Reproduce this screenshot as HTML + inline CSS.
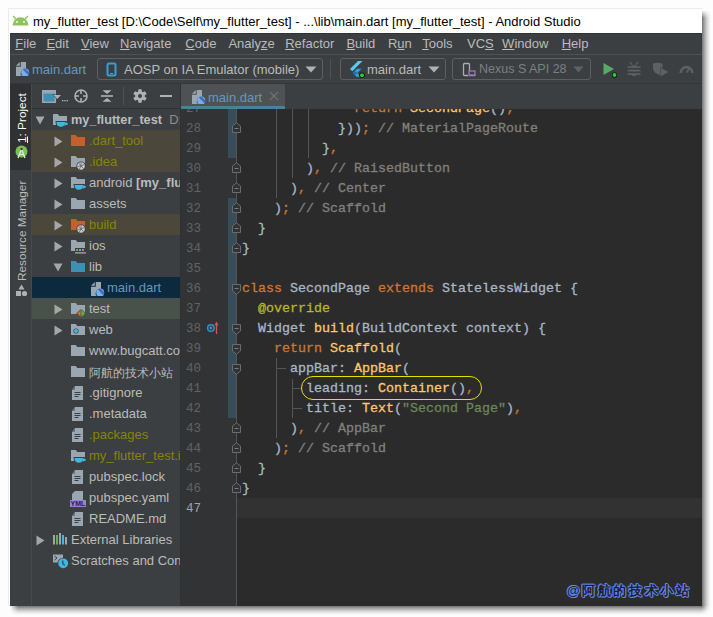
<!DOCTYPE html>
<html><head><meta charset="utf-8">
<style>
*{box-sizing:border-box}
html,body{margin:0;padding:0}
body{width:713px;height:617px;background:#fdfdfd;position:relative;overflow:hidden;font-family:"Liberation Sans",sans-serif;font-size:13px;color:#bbbbbb}
.a{position:absolute}
.t{position:absolute;white-space:nowrap;line-height:1}
.u{text-decoration:underline;text-underline-offset:1px}
.code{font-family:"Liberation Mono",monospace;font-size:13.33px;-webkit-text-stroke:0.3px;white-space:pre;position:absolute;line-height:20px}
.ln{font-family:"Liberation Mono",monospace;font-size:12.5px;position:absolute;color:#606366;white-space:pre;line-height:20px}
.kw{color:#cc7832}.fn{color:#ffc66d}.id{color:#a9b7c6}.cm{color:#808080}.st{color:#6a8759}.an{color:#bbb529}
.row{position:absolute;left:32px;width:148px;height:21px}
</style></head>
<body>
<svg width="0" height="0" style="position:absolute"><defs>
<clipPath id="dclip"><circle cx="10.2" cy="11.6" r="4"/></clipPath>
<symbol id="i_dartfile" viewBox="0 0 15 15">
 <path d="M5.8 1 H11 V8 A4.4 4.4 0 0 0 6.6 15 H1 V5.8 H5.8 Z" fill="#9aa7b0"/>
 <path d="M1 4.8 L4.8 1 V4.8 Z" fill="#9aa7b0"/>
 <circle cx="10.2" cy="11.6" r="4" fill="#6fb3ea"/>
 <g clip-path="url(#dclip)"><path d="M7.6 8.2 L9.6 6.6 L15.5 12.5 L13.5 14.5 Z" fill="#4b69c2"/></g>
</symbol></defs></svg>

<!-- outer faint border -->
<div class="a" style="left:8px;top:8px;width:695px;height:1px;background:#ececec"></div>
<div class="a" style="left:8px;top:8px;width:1px;height:598px;background:#ececec"></div>
<!-- window -->
<div class="a" style="left:10px;top:10px;width:692px;height:596px;background:#3c3f41"></div>
<div class="a" style="left:702px;top:10px;width:9px;height:596px;background:linear-gradient(90deg,rgba(0,0,0,0.54),rgba(0,0,0,0.3) 3px,rgba(0,0,0,0.1) 6px,rgba(0,0,0,0) 9px);-webkit-mask:linear-gradient(180deg,transparent 0,#000 8px)"></div>
<div class="a" style="left:10px;top:606px;width:692px;height:9px;background:linear-gradient(180deg,rgba(0,0,0,0.54),rgba(0,0,0,0.3) 3px,rgba(0,0,0,0.1) 6px,rgba(0,0,0,0) 9px);-webkit-mask:linear-gradient(90deg,transparent 0,#000 8px)"></div>
<div class="a" style="left:702px;top:606px;width:9px;height:9px;background:radial-gradient(circle at 0 0,rgba(0,0,0,0.5),rgba(0,0,0,0.25) 3px,rgba(0,0,0,0.07) 6px,rgba(0,0,0,0) 9px)"></div>
<!-- title bar -->
<div class="a" style="left:10px;top:10px;width:692px;height:23px;background:#ffffff"></div>
<svg class="a" style="left:12px;top:15px" width="17" height="11" viewBox="0 0 17 11">
  <path d="M0.5 10.5 A8 8.3 0 0 1 16.5 10.5 Z" fill="#8fc25d"/>
  <line x1="1" y1="1" x2="3.8" y2="3.8" stroke="#8fc25d" stroke-width="1.3"/>
  <line x1="16" y1="1" x2="13.2" y2="3.8" stroke="#8fc25d" stroke-width="1.3"/>
  <circle cx="5" cy="7" r="0.9" fill="#fff"/><circle cx="12" cy="7" r="0.9" fill="#fff"/>
</svg>
<div class="t" style="left:33px;top:15px;color:#000;font-size:13px">my_flutter_test [D:\Code\Self\my_flutter_test] - ...\lib\main.dart [my_flutter_test] - Android Studio</div>

<!-- menu bar -->
<div class="a" style="left:10px;top:33px;width:692px;height:21px;background:#3c3f41"></div>
<div class="a" style="left:10px;top:33px;width:692px;height:1px;background:#303234"></div>
<div class="a" style="left:10px;top:54px;width:692px;height:1px;background:#515151"></div>
<div class="t" style="left:15.3px;top:37px"><span class="u">F</span>ile</div>
<div class="t" style="left:46.4px;top:37px"><span class="u">E</span>dit</div>
<div class="t" style="left:81.0px;top:37px"><span class="u">V</span>iew</div>
<div class="t" style="left:120.1px;top:37px"><span class="u">N</span>avigate</div>
<div class="t" style="left:185.3px;top:37px"><span class="u">C</span>ode</div>
<div class="t" style="left:228.4px;top:37px">Analy<span class="u">z</span>e</div>
<div class="t" style="left:285.2px;top:37px"><span class="u">R</span>efactor</div>
<div class="t" style="left:346.4px;top:37px"><span class="u">B</span>uild</div>
<div class="t" style="left:387.9px;top:37px">R<span class="u">u</span>n</div>
<div class="t" style="left:422.2px;top:37px"><span class="u">T</span>ools</div>
<div class="t" style="left:467.0px;top:37px">VC<span class="u">S</span></div>
<div class="t" style="left:502.1px;top:37px"><span class="u">W</span>indow</div>
<div class="t" style="left:561.7px;top:37px"><span class="u">H</span>elp</div>

<!-- toolbar -->
<div class="a" style="left:10px;top:55px;width:692px;height:28px;background:#3c3f41"></div>
<div class="a" style="left:10px;top:83px;width:692px;height:1px;background:#353739"></div>


<!-- toolbar content -->
<svg class="a" style="left:15px;top:61px" width="15" height="15"><use href="#i_dartfile"/></svg>
<div class="t" style="left:32px;top:63px;color:#6897bb">main.dart</div>

<div class="a" style="left:97px;top:58px;width:226px;height:22px;border:1px solid #5e6060;border-radius:3px"></div>
<svg class="a" style="left:106px;top:62px" width="11" height="15" viewBox="0 0 11 15">
  <rect x="1.5" y="1.5" width="8" height="12" rx="1.5" fill="none" stroke="#389fd6" stroke-width="2"/>
  <rect x="4" y="11" width="3" height="1" fill="#389fd6"/>
</svg>
<div class="t" style="left:124px;top:63px">AOSP on IA Emulator (mobile)</div>
<svg class="a" style="left:305px;top:66px" width="12" height="7" viewBox="0 0 12 7"><path d="M0.5 0.5 H11.5 L6 6.5 Z" fill="#afb1b3"/></svg>
<div class="a" style="left:330px;top:59px;width:1px;height:20px;background:#515151"></div>

<div class="a" style="left:340px;top:58px;width:106px;height:22px;border:1px solid #5e6060;border-radius:3px"></div>
<svg class="a" style="left:349px;top:60px" width="16" height="18" viewBox="0 0 16 18">
  <path d="M1 9 L9 1 H13.5 L3.3 11.2 Z" fill="#5cc6f7"/>
  <path d="M8 8.8 H12.5 L8.3 13 L12 16.8 H7.5 L3.8 13 Z" fill="#2f9fe0"/>
  <path d="M5.9 10.9 L8.3 13 L6 15.2 L3.8 13 Z" fill="#1d6fb5"/>
  <circle cx="13" cy="15.3" r="2.7" fill="#000"/>
  <circle cx="13" cy="15.3" r="2" fill="#21d329"/>
</svg>
<div class="t" style="left:367px;top:63px">main.dart</div>
<svg class="a" style="left:428px;top:66px" width="12" height="7" viewBox="0 0 12 7"><path d="M0.5 0.5 H11.5 L6 6.5 Z" fill="#afb1b3"/></svg>

<div class="a" style="left:452px;top:58px;width:139px;height:22px;border:1px solid #5e6060;border-radius:3px"></div>
<svg class="a" style="left:462px;top:62px" width="15" height="15" viewBox="0 0 15 15">
  <rect x="1.5" y="1.5" width="6" height="12" rx="1" fill="none" stroke="#a8adb0" stroke-width="1.3"/>
  <rect x="6" y="8.5" width="7.5" height="5.5" fill="#3c3f41"/>
  <rect x="7" y="9" width="6" height="4" fill="none" stroke="#a77bca" stroke-width="1.2"/>
  <rect x="7" y="13" width="6.5" height="1.2" fill="#a77bca"/>
</svg>
<div class="t" style="left:479px;top:63px;color:#7d7f82;font-size:12.5px">Nexus S API 28</div>
<svg class="a" style="left:573px;top:66px" width="11" height="7" viewBox="0 0 11 7"><path d="M0.5 0.5 H10.5 L5.5 6.5 Z" fill="#5f6163"/></svg>

<svg class="a" style="left:601px;top:61px" width="18" height="17" viewBox="0 0 18 17">
  <path d="M2.5 2 L13 8 L2.5 14 Z" fill="#59a869"/>
  <circle cx="13.5" cy="14" r="2.6" fill="#000"/>
  <circle cx="13.5" cy="14" r="2" fill="#21d329"/>
</svg>
<svg class="a" style="left:627px;top:61px" width="14" height="16" viewBox="0 0 14 16" fill="#5d6062">
  <ellipse cx="7" cy="9.6" rx="4.3" ry="5.6"/>
  <rect x="0.5" y="5.3" width="13" height="1.6"/><rect x="0.5" y="8.8" width="13" height="1.6"/><rect x="0.5" y="12.3" width="13" height="1.6"/>
  <path d="M3 0.8 L5.2 3.8 M11 0.8 L8.8 3.8" stroke="#5d6062" stroke-width="1.4"/>
  <rect x="3" y="7" width="8" height="1.6" fill="#3c3f41"/><rect x="3" y="10.5" width="8" height="1.6" fill="#3c3f41"/>
</svg>
<svg class="a" style="left:652px;top:62px" width="17" height="15" viewBox="0 0 17 15" fill="#5d6062">
  <path d="M1 1.5 Q5.5 0 10.5 1.5 V5.5 H8 V13 Q2.5 11.5 1 7.5 Z"/>
  <path d="M8.5 5.5 L16.5 10 L8.5 14.5 Z"/>
</svg>
<svg class="a" style="left:679px;top:64px" width="15" height="10" viewBox="0 0 15 10">
  <path d="M1.6 9 A5.9 5.9 0 0 1 13.4 9" fill="none" stroke="#5d6062" stroke-width="2.6"/>
  <path d="M7.5 8.5 L10.5 4.5" stroke="#5d6062" stroke-width="1.8"/>
</svg>

<!-- left stripe -->
<div class="a" style="left:10px;top:84px;width:21px;height:522px;background:#3c3f41"></div>
<div class="a" style="left:10px;top:84px;width:21px;height:86px;background:#2f3133"></div>
<div class="a" style="left:31px;top:84px;width:1px;height:522px;background:#47494b"></div>

<!-- project panel -->
<div class="a" style="left:32px;top:84px;width:148px;height:522px;background:#3c3f41"></div>
<div class="a" style="left:32px;top:108px;width:148px;height:1px;background:#323232"></div>


<!-- editor -->
<div class="a" style="left:180px;top:84px;width:522px;height:25px;background:#3c3f41"></div>
<div class="a" style="left:180px;top:109px;width:56px;height:497px;background:#313335"></div>
<div class="a" style="left:237px;top:109px;width:465px;height:497px;background:#2b2b2b"></div>



<!-- CODE -->
<div class="a" style="left:237px;top:498px;width:465px;height:20px;background:#323232"></div>
<div class="a" style="left:228px;top:109px;width:8px;height:49px;background:#384c5a"></div>
<div class="a" style="left:228px;top:198px;width:8px;height:220px;background:#384c5a"></div>
<div class="a" style="left:236px;top:109px;width:1px;height:497px;background:#555555"></div>
<div class="a" style="left:276px;top:109px;width:1px;height:89px;background:#555555"></div>
<div class="a" style="left:292px;top:109px;width:1px;height:69px;background:#555555"></div>
<div class="a" style="left:308px;top:109px;width:1px;height:49px;background:#555555"></div>
<div class="a" style="left:276px;top:358px;width:1px;height:80px;background:#555555"></div>
<div class="a" style="left:292px;top:379px;width:1px;height:39px;background:#555555"></div>
<div class="a" style="left:276px;top:368px;width:10px;height:1px;background:#555555"></div>
<div class="a" style="left:292px;top:388px;width:10px;height:1px;background:#555555"></div>
<div class="a" style="left:292px;top:408px;width:10px;height:1px;background:#555555"></div>
<div class="ln" style="left:180px;width:21px;text-align:right;top:99px;color:#606366">27</div>
<div class="ln" style="left:180px;width:21px;text-align:right;top:119px;color:#606366">28</div>
<div class="ln" style="left:180px;width:21px;text-align:right;top:139px;color:#606366">29</div>
<div class="ln" style="left:180px;width:21px;text-align:right;top:159px;color:#606366">30</div>
<div class="ln" style="left:180px;width:21px;text-align:right;top:179px;color:#606366">31</div>
<div class="ln" style="left:180px;width:21px;text-align:right;top:199px;color:#606366">32</div>
<div class="ln" style="left:180px;width:21px;text-align:right;top:219px;color:#606366">33</div>
<div class="ln" style="left:180px;width:21px;text-align:right;top:239px;color:#606366">34</div>
<div class="ln" style="left:180px;width:21px;text-align:right;top:259px;color:#606366">35</div>
<div class="ln" style="left:180px;width:21px;text-align:right;top:279px;color:#606366">36</div>
<div class="ln" style="left:180px;width:21px;text-align:right;top:299px;color:#606366">37</div>
<div class="ln" style="left:180px;width:21px;text-align:right;top:319px;color:#606366">38</div>
<div class="ln" style="left:180px;width:21px;text-align:right;top:339px;color:#606366">39</div>
<div class="ln" style="left:180px;width:21px;text-align:right;top:359px;color:#606366">40</div>
<div class="ln" style="left:180px;width:21px;text-align:right;top:379px;color:#606366">41</div>
<div class="ln" style="left:180px;width:21px;text-align:right;top:399px;color:#606366">42</div>
<div class="ln" style="left:180px;width:21px;text-align:right;top:419px;color:#606366">43</div>
<div class="ln" style="left:180px;width:21px;text-align:right;top:439px;color:#606366">44</div>
<div class="ln" style="left:180px;width:21px;text-align:right;top:459px;color:#606366">45</div>
<div class="ln" style="left:180px;width:21px;text-align:right;top:479px;color:#606366">46</div>
<div class="ln" style="left:180px;width:21px;text-align:right;top:499px;color:#a4a3a3">47</div>
<div class="a" style="left:237px;top:109px;width:465px;height:497px;overflow:hidden"><div class="a" style="left:-237px;top:-109px;width:713px;height:617px"><div class="code" style="left:242px;top:99px">              <span class="kw">return</span> <span class="fn">SecondPage</span><span class="id">()</span><span class="kw">;</span></div>
<div class="code" style="left:242px;top:119px">            <span class="id">}))</span><span class="kw">;</span><span class="cm"> // MaterialPageRoute</span></div>
<div class="code" style="left:242px;top:139px">          <span class="id">}</span><span class="kw">,</span></div>
<div class="code" style="left:242px;top:159px">        <span class="id">)</span><span class="kw">,</span><span class="cm"> // RaisedButton</span></div>
<div class="code" style="left:242px;top:179px">      <span class="id">)</span><span class="kw">,</span><span class="cm"> // Center</span></div>
<div class="code" style="left:242px;top:199px">    <span class="id">)</span><span class="kw">;</span><span class="cm"> // Scaffold</span></div>
<div class="code" style="left:242px;top:219px">  <span class="id">}</span></div>
<div class="code" style="left:242px;top:239px"><span class="id">}</span></div>
<div class="code" style="left:242px;top:259px"></div>
<div class="code" style="left:242px;top:279px"><span class="kw">class</span><span class="id"> SecondPage </span><span class="kw">extends</span><span class="id"> StatelessWidget {</span></div>
<div class="code" style="left:242px;top:299px">  <span class="an">@override</span></div>
<div class="code" style="left:242px;top:319px">  <span class="id">Widget </span><span class="fn">build</span><span class="id">(BuildContext context) {</span></div>
<div class="code" style="left:242px;top:339px">    <span class="kw">return</span> <span class="fn">Scaffold</span><span class="id">(</span></div>
<div class="code" style="left:242px;top:359px">      <span class="id">appBar: </span><span class="fn">AppBar</span><span class="id">(</span></div>
<div class="code" style="left:242px;top:379px">        <span class="id">leading: </span><span class="fn">Container</span><span class="id">()</span><span class="kw">,</span></div>
<div class="code" style="left:242px;top:399px">        <span class="id">title: </span><span class="fn">Text</span><span class="id">(</span><span class="st">&quot;Second Page&quot;</span><span class="id">)</span><span class="kw">,</span></div>
<div class="code" style="left:242px;top:419px">      <span class="id">)</span><span class="kw">,</span><span class="cm"> // AppBar</span></div>
<div class="code" style="left:242px;top:439px">    <span class="id">)</span><span class="kw">;</span><span class="cm"> // Scaffold</span></div>
<div class="code" style="left:242px;top:459px">  <span class="id">}</span></div>
<div class="code" style="left:242px;top:479px"><span class="id">}</span></div>
<div class="code" style="left:242px;top:499px"></div></div></div>
<svg class="a" style="left:231px;top:122px" width="11" height="11" viewBox="0 0 11 11"><path d="M1.5 10.5 V4 L5.5 0.8 L9.5 4 V10.5 Z" fill="#313335" stroke="#6b6b6b" stroke-width="1"/><path d="M3.5 6.5 H7.5" stroke="#7b7b7b" stroke-width="1"/></svg>
<svg class="a" style="left:231px;top:162px" width="11" height="11" viewBox="0 0 11 11"><path d="M1.5 10.5 V4 L5.5 0.8 L9.5 4 V10.5 Z" fill="#313335" stroke="#6b6b6b" stroke-width="1"/><path d="M3.5 6.5 H7.5" stroke="#7b7b7b" stroke-width="1"/></svg>
<svg class="a" style="left:231px;top:182px" width="11" height="11" viewBox="0 0 11 11"><path d="M1.5 10.5 V4 L5.5 0.8 L9.5 4 V10.5 Z" fill="#313335" stroke="#6b6b6b" stroke-width="1"/><path d="M3.5 6.5 H7.5" stroke="#7b7b7b" stroke-width="1"/></svg>
<svg class="a" style="left:231px;top:202px" width="11" height="11" viewBox="0 0 11 11"><path d="M1.5 10.5 V4 L5.5 0.8 L9.5 4 V10.5 Z" fill="#313335" stroke="#6b6b6b" stroke-width="1"/><path d="M3.5 6.5 H7.5" stroke="#7b7b7b" stroke-width="1"/></svg>
<svg class="a" style="left:231px;top:222px" width="11" height="11" viewBox="0 0 11 11"><path d="M1.5 10.5 V4 L5.5 0.8 L9.5 4 V10.5 Z" fill="#313335" stroke="#6b6b6b" stroke-width="1"/><path d="M3.5 6.5 H7.5" stroke="#7b7b7b" stroke-width="1"/></svg>
<svg class="a" style="left:231px;top:242px" width="11" height="11" viewBox="0 0 11 11"><path d="M1.5 10.5 V4 L5.5 0.8 L9.5 4 V10.5 Z" fill="#313335" stroke="#6b6b6b" stroke-width="1"/><path d="M3.5 6.5 H7.5" stroke="#7b7b7b" stroke-width="1"/></svg>
<svg class="a" style="left:231px;top:422px" width="11" height="11" viewBox="0 0 11 11"><path d="M1.5 10.5 V4 L5.5 0.8 L9.5 4 V10.5 Z" fill="#313335" stroke="#6b6b6b" stroke-width="1"/><path d="M3.5 6.5 H7.5" stroke="#7b7b7b" stroke-width="1"/></svg>
<svg class="a" style="left:231px;top:442px" width="11" height="11" viewBox="0 0 11 11"><path d="M1.5 10.5 V4 L5.5 0.8 L9.5 4 V10.5 Z" fill="#313335" stroke="#6b6b6b" stroke-width="1"/><path d="M3.5 6.5 H7.5" stroke="#7b7b7b" stroke-width="1"/></svg>
<svg class="a" style="left:231px;top:462px" width="11" height="11" viewBox="0 0 11 11"><path d="M1.5 10.5 V4 L5.5 0.8 L9.5 4 V10.5 Z" fill="#313335" stroke="#6b6b6b" stroke-width="1"/><path d="M3.5 6.5 H7.5" stroke="#7b7b7b" stroke-width="1"/></svg>
<svg class="a" style="left:231px;top:482px" width="11" height="11" viewBox="0 0 11 11"><path d="M1.5 10.5 V4 L5.5 0.8 L9.5 4 V10.5 Z" fill="#313335" stroke="#6b6b6b" stroke-width="1"/><path d="M3.5 6.5 H7.5" stroke="#7b7b7b" stroke-width="1"/></svg>
<svg class="a" style="left:231px;top:284px" width="11" height="11" viewBox="0 0 11 11"><path d="M1.5 0.5 V7 L5.5 10.2 L9.5 7 V0.5 Z" fill="#313335" stroke="#6b6b6b" stroke-width="1"/><path d="M3.5 4.5 H7.5" stroke="#7b7b7b" stroke-width="1"/></svg>
<svg class="a" style="left:231px;top:324px" width="11" height="11" viewBox="0 0 11 11"><path d="M1.5 0.5 V7 L5.5 10.2 L9.5 7 V0.5 Z" fill="#313335" stroke="#6b6b6b" stroke-width="1"/><path d="M3.5 4.5 H7.5" stroke="#7b7b7b" stroke-width="1"/></svg>
<svg class="a" style="left:231px;top:344px" width="11" height="11" viewBox="0 0 11 11"><path d="M1.5 0.5 V7 L5.5 10.2 L9.5 7 V0.5 Z" fill="#313335" stroke="#6b6b6b" stroke-width="1"/><path d="M3.5 4.5 H7.5" stroke="#7b7b7b" stroke-width="1"/></svg>
<svg class="a" style="left:231px;top:364px" width="11" height="11" viewBox="0 0 11 11"><path d="M1.5 0.5 V7 L5.5 10.2 L9.5 7 V0.5 Z" fill="#313335" stroke="#6b6b6b" stroke-width="1"/><path d="M3.5 4.5 H7.5" stroke="#7b7b7b" stroke-width="1"/></svg>
<svg class="a" style="left:206px;top:320px" width="14" height="15" viewBox="0 0 14 15"><circle cx="4.9" cy="8" r="4" fill="#3592c4"/><circle cx="4.9" cy="8" r="2" fill="none" stroke="#2f3a44" stroke-width="1.1"/><circle cx="4.9" cy="8" r="0.8" fill="#3592c4"/><path d="M10.5 14 V4" stroke="#d9534f" stroke-width="1.3"/><path d="M8.3 5.2 L10.5 1.6 L12.7 5.2 Z" fill="#d9534f"/></svg>
<div class="a" style="left:301px;top:376px;width:181px;height:24px;border:1.8px solid #e8e000;border-radius:12px"></div>
<!-- /CODE -->
<!-- TREE -->
<div class="a" style="left:0;top:0;width:180px;height:606px;overflow:hidden">
<svg width="0" height="0" style="position:absolute">
<defs>
 <path id="fp" d="M1 2 H5.8 L7.3 4 H15 V13 H1 Z"/>
 <symbol id="i_folder" viewBox="0 0 17 17"><use href="#fp" fill="#9aa7b0"/></symbol>
 <symbol id="i_folder_blue" viewBox="0 0 17 17"><use href="#fp" fill="#3d8fb3"/></symbol>
 <symbol id="i_folder_orange" viewBox="0 0 17 17"><use href="#fp" fill="#c5602e"/></symbol>
 <symbol id="i_cupb" viewBox="0 0 17 17"><path d="M3.5 9 H14 Q17.5 9.5 16.8 12.5 Q15 15.8 9 15.8 Q3.5 15.8 3.5 9 Z" fill="#3c3f41"/><path d="M4.5 10 H13 Q13 14.8 8.8 14.8 Q4.5 14.8 4.5 10 Z" fill="#40b6e0"/><path d="M12.5 10.6 Q16.5 10.2 15.8 12.6 L12.3 13.7 Z" fill="#40b6e0"/></symbol>
 <symbol id="i_folder_cup" viewBox="0 0 17 17"><use href="#fp" fill="#9aa7b0"/><use href="#i_cupb" width="17" height="17"/></symbol>
 <symbol id="i_gearb" viewBox="0 0 17 17"><circle cx="11" cy="12" r="4.6" fill="#3c3f41"/><circle cx="11" cy="12" r="3.8" fill="#c9cbcd"/><path d="M11 12 L11 8.4 M11 12 L14.3 10.4 M11 12 L13.8 14.8 M11 12 L9.2 15.3 M11 12 L7.3 12.5 M11 12 L8.6 9" stroke="#6d6f71" stroke-width="0.9"/><circle cx="11" cy="12" r="1" fill="#6d6f71"/></symbol>
 <symbol id="i_folder_gear" viewBox="0 0 17 17"><use href="#fp" fill="#9aa7b0"/><use href="#i_gearb" width="17" height="17"/></symbol>
 <symbol id="i_folder_orange_gear" viewBox="0 0 17 17"><use href="#fp" fill="#c5602e"/><use href="#i_gearb" width="17" height="17"/></symbol>
 <symbol id="i_folder_ios" viewBox="0 0 17 17"><use href="#fp" fill="#9aa7b0"/><rect x="5" y="10" width="11" height="6" fill="#3c3f41"/><rect x="6" y="11" width="2" height="2" fill="#62b543"/><rect x="9" y="11" width="2" height="2" fill="#40b6e0"/><rect x="12" y="11" width="2" height="2" fill="#e57745"/><rect x="5" y="14.3" width="11" height="1.2" fill="#afb1b3"/></symbol>
 <symbol id="i_folder_test" viewBox="0 0 17 17"><use href="#fp" fill="#9aa7b0"/><path d="M10.8 8 L6.2 12.5 L10.8 17 Z M11.2 8 L16 12.5 L11.2 17 Z" fill="#49524a"/><path d="M10.5 9.2 L7.3 12.5 L10.5 15.8 Z" fill="#e2662f"/><path d="M11.5 9.2 L15 12.5 L11.5 15.8 Z" fill="#62b543"/></symbol>
 <symbol id="i_folder_web" viewBox="0 0 17 17"><use href="#fp" fill="#9aa7b0"/><circle cx="6" cy="9" r="2.6" fill="#3c3f41"/><circle cx="6" cy="9" r="2" fill="#40b6e0"/></symbol>
 <path id="filep" d="M5 1 H13 V15 H2 V5 Z"/>
 <symbol id="i_file" viewBox="0 0 17 17"><use href="#filep" fill="#9aa7b0"/><path d="M2 5 L5 1 V5 Z" fill="#3c3f41" opacity="0.45"/><rect x="4.5" y="7" width="6" height="1" fill="#3c3f41"/><rect x="4.5" y="9" width="6" height="1" fill="#3c3f41"/><rect x="4.5" y="11" width="4" height="1" fill="#3c3f41"/></symbol>
 <symbol id="i_yml" viewBox="0 0 17 17"><path d="M5 1 H13 V10 H2 V4 Z" fill="#9aa7b0"/><rect x="0" y="10" width="16" height="7" fill="#b99bf8" opacity="0.75"/><text x="8" y="16" font-size="7" font-family="Liberation Sans" font-weight="bold" text-anchor="middle" fill="#231f4f">YML</text></symbol>
 <symbol id="i_dart" viewBox="0 0 17 17"><use href="#i_dartfile" x="2" y="1" width="15" height="15"/></symbol>
 <symbol id="i_libs" viewBox="0 0 17 17"><rect x="1" y="3" width="2" height="9.5" fill="#9aa7b0"/><rect x="4" y="3" width="2" height="9.5" fill="#62b543"/><rect x="7" y="1" width="2" height="11.5" fill="#9aa7b0"/><rect x="10" y="3" width="2" height="9.5" fill="#40b6e0"/><rect x="13" y="5" width="2" height="7.5" fill="#9aa7b0"/></symbol>
 <symbol id="i_scratch" viewBox="0 0 17 17"><rect x="1" y="1.5" width="10" height="8" fill="#9aa7b0"/><path d="M2.5 3 L5 5 L2.5 7" stroke="#3c3f41" stroke-width="1" fill="none"/><circle cx="11.2" cy="10.3" r="5.6" fill="#3c3f41"/><circle cx="11.2" cy="10.3" r="4.9" fill="#40b6e0"/><path d="M10.8 7.5 V10.6 L12.8 12.4" stroke="#3c3f41" stroke-width="1.2" fill="none"/></symbol>
</defs></svg>
<svg class="a" style="left:35px;top:116px" width="10" height="9"><path d="M0.5 0.5 H9.5 L5 8.5 Z" fill="#a4a6a8"/></svg>
<svg class="a" style="left:52px;top:112px" width="17" height="17"><use href="#i_folder_cup"/></svg>
<div class="t" style="left:71px;top:113px;"><b style="color:#bbbbbb;font-size:12.7px">my_flutter_test</b>&nbsp; <span style="color:#8c8c8c">D:\Code\Self\my_flutter_test</span></div>
<div class="a" style="left:32px;top:130px;width:148px;height:21px;background:#4b483b"></div>
<svg class="a" style="left:54px;top:136px" width="9" height="11"><path d="M0.5 0.5 L8.5 5.5 L0.5 10.5 Z" fill="#a4a6a8"/></svg>
<svg class="a" style="left:70px;top:133px" width="17" height="17"><use href="#i_folder_orange"/></svg>
<div class="t" style="left:89px;top:134px;color:#848504;">.dart_tool</div>
<div class="a" style="left:32px;top:151px;width:148px;height:21px;background:#4b483b"></div>
<svg class="a" style="left:54px;top:157px" width="9" height="11"><path d="M0.5 0.5 L8.5 5.5 L0.5 10.5 Z" fill="#a4a6a8"/></svg>
<svg class="a" style="left:70px;top:154px" width="17" height="17"><use href="#i_folder_gear"/></svg>
<div class="t" style="left:89px;top:155px;color:#848504;">.idea</div>
<svg class="a" style="left:54px;top:178px" width="9" height="11"><path d="M0.5 0.5 L8.5 5.5 L0.5 10.5 Z" fill="#a4a6a8"/></svg>
<svg class="a" style="left:70px;top:175px" width="17" height="17"><use href="#i_folder_cup"/></svg>
<div class="t" style="left:89px;top:176px;">android <b>[my_flutter_test_android]</b></div>
<svg class="a" style="left:54px;top:199px" width="9" height="11"><path d="M0.5 0.5 L8.5 5.5 L0.5 10.5 Z" fill="#a4a6a8"/></svg>
<svg class="a" style="left:70px;top:196px" width="17" height="17"><use href="#i_folder"/></svg>
<div class="t" style="left:89px;top:197px;">assets</div>
<div class="a" style="left:32px;top:214px;width:148px;height:21px;background:#4b483b"></div>
<svg class="a" style="left:54px;top:220px" width="9" height="11"><path d="M0.5 0.5 L8.5 5.5 L0.5 10.5 Z" fill="#a4a6a8"/></svg>
<svg class="a" style="left:70px;top:217px" width="17" height="17"><use href="#i_folder_orange_gear"/></svg>
<div class="t" style="left:89px;top:218px;color:#848504;">build</div>
<svg class="a" style="left:54px;top:241px" width="9" height="11"><path d="M0.5 0.5 L8.5 5.5 L0.5 10.5 Z" fill="#a4a6a8"/></svg>
<svg class="a" style="left:70px;top:238px" width="17" height="17"><use href="#i_folder_ios"/></svg>
<div class="t" style="left:89px;top:239px;">ios</div>
<svg class="a" style="left:53px;top:263px" width="10" height="9"><path d="M0.5 0.5 H9.5 L5 8.5 Z" fill="#a4a6a8"/></svg>
<svg class="a" style="left:70px;top:259px" width="17" height="17"><use href="#i_folder_blue"/></svg>
<div class="t" style="left:89px;top:260px;">lib</div>
<div class="a" style="left:32px;top:277px;width:148px;height:21px;background:#0d293e"></div>
<svg class="a" style="left:88px;top:280px" width="17" height="17"><use href="#i_dart"/></svg>
<div class="t" style="left:107px;top:281px;color:#6897bb;">main.dart</div>
<div class="a" style="left:32px;top:298px;width:148px;height:21px;background:#49524a"></div>
<svg class="a" style="left:54px;top:304px" width="9" height="11"><path d="M0.5 0.5 L8.5 5.5 L0.5 10.5 Z" fill="#a4a6a8"/></svg>
<svg class="a" style="left:70px;top:301px" width="17" height="17"><use href="#i_folder_test"/></svg>
<div class="t" style="left:89px;top:302px;">test</div>
<svg class="a" style="left:54px;top:325px" width="9" height="11"><path d="M0.5 0.5 L8.5 5.5 L0.5 10.5 Z" fill="#a4a6a8"/></svg>
<svg class="a" style="left:70px;top:322px" width="17" height="17"><use href="#i_folder_web"/></svg>
<div class="t" style="left:89px;top:323px;">web</div>
<svg class="a" style="left:70px;top:343px" width="17" height="17"><use href="#i_folder"/></svg>
<div class="t" style="left:89px;top:344px;">www.bugcatt.com</div>
<svg class="a" style="left:70px;top:364px" width="17" height="17"><use href="#i_folder"/></svg>
<div class="t" style="left:89px;top:365px;"><span style="font-size:12px;position:relative;top:0.5px">阿航的技术小站</span></div>
<svg class="a" style="left:70px;top:385px" width="17" height="17"><use href="#i_file"/></svg>
<div class="t" style="left:89px;top:386px;">.gitignore</div>
<svg class="a" style="left:70px;top:406px" width="17" height="17"><use href="#i_file"/></svg>
<div class="t" style="left:89px;top:407px;">.metadata</div>
<svg class="a" style="left:70px;top:427px" width="17" height="17"><use href="#i_file"/></svg>
<div class="t" style="left:89px;top:428px;color:#848504;">.packages</div>
<svg class="a" style="left:70px;top:448px" width="17" height="17"><use href="#i_folder_cup"/></svg>
<div class="t" style="left:89px;top:449px;color:#848504;">my_flutter_test.iml</div>
<svg class="a" style="left:70px;top:469px" width="17" height="17"><use href="#i_file"/></svg>
<div class="t" style="left:89px;top:470px;">pubspec.lock</div>
<svg class="a" style="left:70px;top:490px" width="17" height="17"><use href="#i_yml"/></svg>
<div class="t" style="left:89px;top:491px;">pubspec.yaml</div>
<svg class="a" style="left:70px;top:511px" width="17" height="17"><use href="#i_file"/></svg>
<div class="t" style="left:89px;top:512px;">README.md</div>
<svg class="a" style="left:36px;top:535px" width="9" height="11"><path d="M0.5 0.5 L8.5 5.5 L0.5 10.5 Z" fill="#a4a6a8"/></svg>
<svg class="a" style="left:52px;top:532px" width="17" height="17"><use href="#i_libs"/></svg>
<div class="t" style="left:71px;top:533px;">External Libraries</div>
<svg class="a" style="left:52px;top:553px" width="17" height="17"><use href="#i_scratch"/></svg>
<div class="t" style="left:71px;top:554px;">Scratches and Consoles</div>
</div>
<!-- /TREE -->
<!-- project toolbar icons -->
<svg class="a" style="left:41px;top:89px" width="29" height="15" viewBox="0 0 29 15">
  <rect x="1" y="1" width="14" height="13" fill="#9aa7b0"/>
  <rect x="2.5" y="4.5" width="11" height="8" fill="#3d8fb3"/>
  <path d="M11.5 5.5 H20.5 L16 10.5 Z" fill="#3c3f41"/>
  <path d="M12.5 6 H20 L16.2 10 Z" fill="#afb1b3"/>
  <rect x="21" y="11" width="1.3" height="1.3" fill="#b8babc"/>
  <rect x="23.3" y="11" width="1.3" height="1.3" fill="#b8babc"/>
  <rect x="25.6" y="11" width="1.3" height="1.3" fill="#b8babc"/>
</svg>
<svg class="a" style="left:73px;top:88px" width="16" height="16" viewBox="0 0 16 16">
  <circle cx="8" cy="8" r="6" fill="none" stroke="#afb1b3" stroke-width="1.6"/>
  <path d="M8 2 V6 M8 10 V14 M2 8 H6 M10 8 H14" stroke="#afb1b3" stroke-width="1.6"/>
</svg>
<svg class="a" style="left:100px;top:89px" width="14" height="14" viewBox="0 0 14 14" fill="#afb1b3">
  <path d="M2.5 1.3 H11.5 L7 5 Z"/>
  <rect x="1" y="6.2" width="12" height="1.6"/>
  <path d="M2.5 12.7 H11.5 L7 9 Z"/>
</svg>
<div class="a" style="left:123px;top:87px;width:1px;height:18px;background:#515151"></div>
<svg class="a" style="left:132px;top:88px" width="16" height="16" viewBox="-8 -8 16 16">
  <g fill="#afb1b3">
    <circle r="4.8"/>
    <rect x="-1.8" y="-6.8" width="3.6" height="13.6" rx="0.8"/>
    <rect x="-1.8" y="-6.8" width="3.6" height="13.6" rx="0.8" transform="rotate(60)"/>
    <rect x="-1.8" y="-6.8" width="3.6" height="13.6" rx="0.8" transform="rotate(120)"/>
  </g>
  <circle r="2" fill="#3c3f41"/>
</svg>
<div class="a" style="left:160px;top:95px;width:12px;height:2px;background:#afb1b3"></div>

<!-- tab -->
<div class="a" style="left:181px;top:84px;width:104px;height:25px;background:#4e5254"></div>
<div class="a" style="left:181px;top:106px;width:104px;height:3px;background:#4a8197"></div>
<div class="a" style="left:180px;top:84px;width:1px;height:522px;background:#2f3133"></div>
<svg class="a" style="left:191px;top:89px" width="15" height="15"><use href="#i_dartfile"/></svg>
<div class="t" style="left:208px;top:91px;color:#6897bb">main.dart</div>
<svg class="a" style="left:269px;top:91px" width="10" height="10" viewBox="0 0 10 10"><path d="M1 1 L9 9 M9 1 L1 9" stroke="#6e7173" stroke-width="1.2"/></svg>

<!-- left stripe labels -->
<div class="t" style="left:17px;top:143px;transform-origin:0 0;transform:rotate(-90deg);color:#ffffff;font-size:11.8px"><span class="u">1</span>: Project</div>
<svg class="a" style="left:15px;top:145px" width="13" height="14" viewBox="0 0 13 14">
  <circle cx="6.5" cy="6.5" r="6" fill="#78c257"/>
  <path d="M3 13 L6.5 4 L10 13" fill="none" stroke="#e8e8e8" stroke-width="1.3"/>
  <path d="M4.3 9.5 H8.7" stroke="#e8e8e8" stroke-width="1"/>
  <circle cx="6.5" cy="4" r="1.2" fill="#3a3a3a"/>
</svg>
<div class="t" style="left:17px;top:281px;transform-origin:0 0;transform:rotate(-90deg);color:#bbbbbb;font-size:11.8px">Resource Manager</div>
<svg class="a" style="left:15px;top:284px" width="13" height="13" viewBox="0 0 13 13" fill="#afb1b3">
  <path d="M6.5 0.5 L9.5 5.5 H3.5 Z"/>
  <rect x="1" y="7" width="5" height="5"/>
  <circle cx="9.5" cy="9.5" r="2.6"/>
</svg>

<!-- watermark -->
<div class="t" style="left:567px;top:584px;font-size:13px;font-weight:bold;color:#1d2030;letter-spacing:2.6px;text-shadow:1px 0 0 #6487ec,-1px 0 0 #6487ec,0 1px 0 #6487ec,0 -1px 0 #6487ec,1px 1px 0 #5d7fe0,-1px -1px 0 #5d7fe0">@阿航的技术小站</div>
</body></html>
